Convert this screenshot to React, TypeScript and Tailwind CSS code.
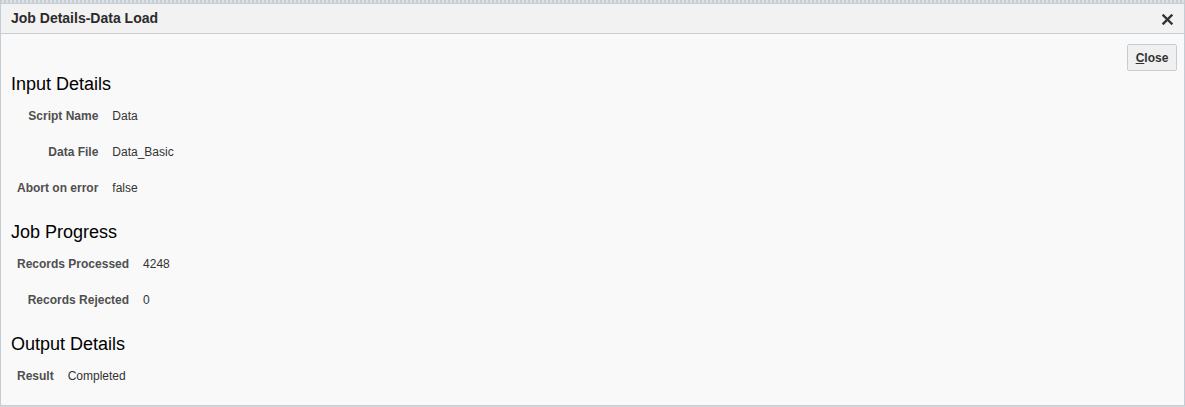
import React from 'react';

type Row = { label: string; value: string };

const Section: React.FC<{ title: string; rows: Row[] }> = ({ title, rows }) => (
  <section className="mb-3 last:mb-0">
    <h2 className="h-7 flex items-center text-[18px] text-black leading-none">{title}</h2>
    <div className="grid grid-cols-[auto_auto] justify-start pl-[6px]">
      {rows.map((r) => (
        <React.Fragment key={r.label}>
          <div className="h-9 flex items-center justify-end font-bold text-[12px] text-[#4f4f4f]">{r.label}</div>
          <div className="h-9 flex items-center pl-[14px] text-[12px] text-[#333]">{r.value}</div>
        </React.Fragment>
      ))}
    </div>
  </section>
);

const App: React.FC = () => {
  return (
    <div className="w-[1185px] h-[407px] bg-[#d3d8dc] overflow-hidden font-['Liberation_Sans',Arial,sans-serif]">
      <div className="h-[3px] bg-[repeating-linear-gradient(90deg,#c7ccd0_0px,#c7ccd0_2px,#dfe2e4_2px,#dfe2e4_4px)]" />
      <div className="h-[403px] flex flex-col border border-[#c4ced7] bg-[#f9f9f9]">
        <div className="h-[30px] shrink-0 flex items-center justify-between pl-[10px] pr-[11px] bg-[#f2f2f2] border-b border-[#c4ced7]">
          <span className="text-[14px] font-bold text-[#2b2b2b]">Job Details-Data Load</span>
          <svg width="11" height="11" viewBox="0 0 11 11" className="mt-px">
            <path d="M1.5 1.5 L9.5 9.5 M9.5 1.5 L1.5 9.5" stroke="#333" strokeWidth="2.4" strokeLinecap="square" />
          </svg>
        </div>
        <div className="flex-1 px-[10px]">
          <div className="flex justify-end pt-[10px] -mr-[3px]">
            <button className="h-[27px] w-[50px] rounded-[2px] border border-[#c4ced7] bg-[#f0f0f0] text-[12px] font-bold text-[#333]">
              <span className="underline">C</span>lose
            </button>
          </div>
          <div className="-mt-px">
            <Section
              title="Input Details"
              rows={[
                { label: 'Script Name', value: 'Data' },
                { label: 'Data File', value: 'Data_Basic' },
                { label: 'Abort on error', value: 'false' },
              ]}
            />
            <Section
              title="Job Progress"
              rows={[
                { label: 'Records Processed', value: '4248' },
                { label: 'Records Rejected', value: '0' },
              ]}
            />
            <Section title="Output Details" rows={[{ label: 'Result', value: 'Completed' }]} />
          </div>
        </div>
      </div>
    </div>
  );
};

export default App;
